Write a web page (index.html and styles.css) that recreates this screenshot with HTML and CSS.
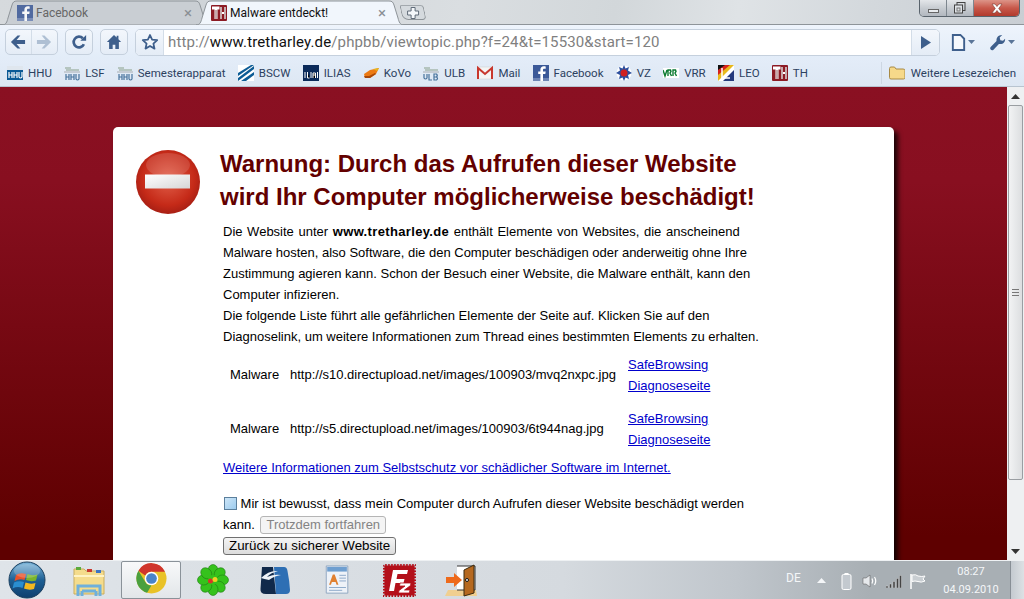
FILE: index.html
```html
<!DOCTYPE html>
<html lang="de">
<head>
<meta charset="utf-8">
<title>Malware entdeckt!</title>
<link rel="stylesheet" href="styles.css">
</head>
<body>
<svg class="defs" width="0" height="0" aria-hidden="true">
  <defs>
    <symbol id="fb" viewBox="0 0 16 16"><rect width="16" height="16" fill="#3b5998"/><rect y="13" width="16" height="3" fill="#6d84b4"/><path d="M10 16V9h2.300l.4-2.600H10V5c0-.8.3-1.200 1.300-1.200h1.400V1.400C12.300 1.300 11.600 1.200 10.800 1.200 8.700 1.200 7.400 2.500 7.400 4.700v1.700H5.200V9h2.200v7z" fill="#fff"/></symbol>
    <symbol id="th" viewBox="0 0 16 16"><rect width="16" height="16" rx="1" fill="#8c1a24"/><path d="M1 1.500h7.500v3H6.500V14h-3V4.500H1zM9 2h2v5h2V2h2v12h-2V9h-2v5H9z" fill="#fff"/><path d="M5 5v9M10 2v12M14 2v12" stroke="#5e0a12" stroke-width=".7"/></symbol>
    <symbol id="hhu" viewBox="0 0 16 16"><rect y="1" width="16" height="4" fill="#dfe6ee"/><rect y="5" width="16" height="10" fill="#0b5a96"/><path d="M2 7v6M5 7v6M2 10h3M7 7v6M10 7v6M7 10h3M12 7v5q1.500 2 3 0V7" stroke="#fff" stroke-width="1.200" fill="none"/></symbol>
    <symbol id="hhug" viewBox="0 0 16 16"><path d="M1 3h6M2 5h13" stroke="#8aa08a" stroke-width="1.200"/><rect y="6" width="16" height="2" fill="#c5ccd4"/><path d="M2 9v6M5 9v6M2 12h3M7 9v6M10 9v6M7 12h3M12 9v5q1.500 2 3 0V9" stroke="#47729c" stroke-width="1.200" fill="none"/></symbol>
    <symbol id="ulb" viewBox="0 0 16 16"><path d="M1 3h6M2 5h13" stroke="#8aa08a" stroke-width="1.200"/><rect y="6" width="16" height="2" fill="#c5ccd4"/><path d="M1 9v4q1.500 2 3 0V9M6 9v6h3M11 9v6h2.500q2-1.500 0-3h-2.500 2.500q1.500-1.500 0-3z" stroke="#47729c" stroke-width="1.200" fill="none"/></symbol>
    <symbol id="bscw" viewBox="0 0 16 16"><rect width="16" height="16" fill="#fff"/><path d="M0 16V13L16 1v3zM0 11V8L13 0h3zM3 16 16 7v3L8 16z" fill="#0d5c95"/></symbol>
    <symbol id="ilias" viewBox="0 0 16 16"><rect width="16" height="16" fill="#0b2a5a"/><path d="M2 7v6M4.500 7v6h2M8 7v6M10 13V8h2.500v5M10 10h2.500M14.500 7v6" stroke="#fff" stroke-width="1"/></symbol>
    <symbol id="kovo" viewBox="0 0 16 16"><path d="M1 9 7 5l9-2-3 6-6 4H2z" fill="#ec7a14"/><path d="M2 13h5l6-4-1-1-6 3H1z" fill="#a8480a"/><path d="M10 4l6-1-2 3z" fill="#e8b61a"/></symbol>
    <symbol id="mail" viewBox="0 0 16 16"><rect y="2" width="16" height="12" fill="#f4f4f4" stroke="#ccc" stroke-width=".5"/><path d="M1 14V3l7 6 7-6v11" fill="none" stroke="#c8372d" stroke-width="2"/></symbol>
    <symbol id="vz" viewBox="0 0 16 16"><circle cx="8" cy="8" r="7.500" fill="#fff"/><path d="M8 0l1.500 3.500L13 2l-1 3.500L16 8l-4 2 1 4-3.500-1.500L8 16l-1.500-3.500L3 14l1-4-4-2 4-2.500L3 2l3.500 1.500z" fill="#2c4f9e"/><circle cx="8" cy="8" r="3.500" fill="#d02020"/></symbol>
    <symbol id="vrr" viewBox="0 0 16 16"><rect y="3" width="16" height="10" fill="#fff"/><path d="M0 5l2 6 2-6M5 11V5h2.500l.5 1.500-1 1.500 1.500 3M10 11V5h2.500l.5 1.500-1 1.500 1.500 3" stroke="#0a7a30" stroke-width="1.400" fill="none"/></symbol>
    <symbol id="leo" viewBox="0 0 16 16"><rect width="16" height="16" fill="#fff"/><path d="M0 0h16L0 16z" fill="#e8b81a"/><path d="M0 0h12L0 10z" fill="#d4221e"/><path d="M0 0h7L0 5z" fill="#111"/><path d="M16 5 5 16h11z" fill="#24397c"/><path d="M4 3v10h8" stroke="#fff" stroke-width="1.500" fill="none"/></symbol>
    <linearGradient id="orb" x1="0" y1="0" x2="0" y2="1"><stop offset="0" stop-color="#7fb8dc"/><stop offset=".5" stop-color="#1d5f94"/><stop offset="1" stop-color="#0f3f6e"/></linearGradient>
    <radialGradient id="stopg" cx=".5" cy=".45" r=".55"><stop offset="0" stop-color="#e2604a"/><stop offset=".75" stop-color="#c52a18"/><stop offset="1" stop-color="#a81f14"/></radialGradient>
    <linearGradient id="barg" x1="0" y1="0" x2="1" y2="1"><stop offset="0" stop-color="#fff"/><stop offset="1" stop-color="#d6d6d6"/></linearGradient>
  </defs>
</svg>

<div class="tabstrip">
  <div class="tab tab-back">
    <svg class="tab-bg" viewBox="0 0 208 25" preserveAspectRatio="none"><path d="M0 25C4 25 5 22 6 18L10 5C11 2 12 1 15 1H193C196 1 197 2 198 5L202 18C203 22 204 25 208 25z" fill="#c9ced3" stroke="#8e9499"/></svg>
    <svg class="fav"><use href="#fb"/></svg>
    <span class="tab-title">Facebook</span>
    <span class="tab-x">×</span>
  </div>
  <div class="tab tab-active">
    <svg class="tab-bg" viewBox="0 0 208 25" preserveAspectRatio="none"><path d="M0 25C4 25 5 22 6 18L10 5C11 2 12 1 15 1H193C196 1 197 2 198 5L202 18C203 22 204 25 208 25z" fill="#f1f6fc" stroke="#8e9499"/></svg>
    <svg class="fav"><use href="#th"/></svg>
    <span class="tab-title">Malware entdeckt!</span>
    <span class="tab-x">×</span>
  </div>
  <div class="newtab">
    <svg width="14" height="14" viewBox="0 0 14 14"><path d="M5 1.500h4v3.500h3.500v4H9v3.500H5V9H1.500V5H5z" fill="#f4f7fa" stroke="#5f6b78"/></svg>
  </div>
  <div class="winctrls">
    <div class="wc wc-min"><span class="wc-minbar"></span></div>
    <div class="wc wc-max"><svg width="12" height="12" viewBox="0 0 12 12"><rect x="3" y=".5" width="8" height="8" fill="none" stroke="#444"/><rect x=".5" y="3" width="8" height="8" fill="#dfe3e7" stroke="#444"/><rect x="3" y="6" width="3" height="3" fill="none" stroke="#777"/></svg></div>
    <div class="wc wc-close"><svg width="14" height="11" viewBox="0 0 14 11"><path d="M2 1h3l2 2.500L9 1h3L8.700 5.500 12 10H9L7 7.500 5 10H2l3.300-4.500z" fill="#fff" stroke="#7a3a30" stroke-width=".6"/></svg></div>
  </div>
</div>

<div class="toolbar">
  <div class="tbtn tbtn-nav">
    <span class="nav-half nav-back"><svg width="16" height="14" viewBox="0 0 17 14"><path d="M8 0 1 7l7 7h3L7 9h9V5H7l4-5z" fill="#3e5f8c"/></svg></span>
    <span class="nav-half"><svg width="16" height="14" viewBox="0 0 17 14"><path d="M9 0l7 7-7 7H6l4-5H1V5h9L6 0z" fill="#aebfd3"/></svg></span>
  </div>
  <div class="tbtn tbtn-one"><svg width="16" height="16" viewBox="0 0 18 18"><path d="M14.500 11.500A6 6 0 1 1 13.300 4.800" fill="none" stroke="#3e5f8c" stroke-width="3"/><path d="M10.500 7.500h6.500V1z" fill="#3e5f8c"/></svg></div>
  <div class="tbtn tbtn-one"><svg width="16" height="16" viewBox="0 0 18 18"><path d="M9 1 1 9h2.500v8h4v-5h3v5h4V9H17l-3-3V2h-2v2z" fill="#3e5f8c"/></svg></div>
  <div class="omnibox">
    <div class="star"><svg width="18" height="18" viewBox="0 0 18 18"><path d="M9 2l2.100 4.700 5.100.5-3.800 3.400 1.100 5L9 13l-4.500 2.600 1.100-5L1.800 7.200l5.100-.5z" fill="#f3f7fc" stroke="#3e5f8c" stroke-width="1.800" stroke-linejoin="round"/></svg></div>
    <div class="url"><span class="url-dim">http://</span><span class="url-host">www.tretharley.de</span><span class="url-dim">/phpbb/viewtopic.php?f=24&amp;t=15530&amp;start=120</span></div>
    <div class="go"><svg width="11" height="13" viewBox="0 0 11 13"><path d="M1 0v13l10-6.500z" fill="#3e5f8c"/></svg></div>
  </div>
  <div class="tool tool-page"><svg width="15" height="17" viewBox="0 0 15 18"><path d="M1.500 1h8l4 4v12h-12z" fill="#f5f8fc" stroke="#3e5f8c" stroke-width="2"/></svg><svg class="caret" width="7" height="4" viewBox="0 0 7 4"><path d="M0 0h7L3.500 4z" fill="#5a7598"/></svg></div>
  <div class="tool tool-wrench"><svg width="17" height="17" viewBox="0 0 17 18"><path d="M1 14l6.500-6.500C7 4 9.500 .8 13.500 1L10.800 3.700 11.500 6.500l2.800.7L16.500 5C17 8.500 14 11.500 10 10.500L4 17C2 18 0 16 1 14z" fill="#3e5f8c"/></svg><svg class="caret" width="7" height="4" viewBox="0 0 7 4"><path d="M0 0h7L3.500 4z" fill="#5a7598"/></svg></div>
</div>

<div class="bookmarks">
  <div class="bm-list">
    <div class="bm"><svg class="fav"><use href="#hhu"/></svg>HHU</div>
    <div class="bm"><svg class="fav"><use href="#hhug"/></svg>LSF</div>
    <div class="bm"><svg class="fav"><use href="#hhug"/></svg>Semesterapparat</div>
    <div class="bm"><svg class="fav"><use href="#bscw"/></svg>BSCW</div>
    <div class="bm"><svg class="fav"><use href="#ilias"/></svg>ILIAS</div>
    <div class="bm"><svg class="fav"><use href="#kovo"/></svg>KoVo</div>
    <div class="bm"><svg class="fav"><use href="#ulb"/></svg>ULB</div>
    <div class="bm"><svg class="fav"><use href="#mail"/></svg>Mail</div>
    <div class="bm"><svg class="fav"><use href="#fb"/></svg>Facebook</div>
    <div class="bm"><svg class="fav"><use href="#vz"/></svg>VZ</div>
    <div class="bm"><svg class="fav"><use href="#vrr"/></svg>VRR</div>
    <div class="bm"><svg class="fav"><use href="#leo"/></svg>LEO</div>
    <div class="bm"><svg class="fav"><use href="#th"/></svg>TH</div>
  </div>
  <div class="bm bm-other"><svg class="fav" viewBox="0 0 16 16"><path d="M.5 3.500q0-1.500 1.500-1.500h3.500l1.500 2h7q2 0 2 1.500v7q0 1.500-1.500 1.500H2q-1.500 0-1.500-1.500z" fill="#f6d98a" stroke="#a88a45"/></svg>Weitere Lesezeichen</div>
</div>

<div class="viewport">
  <div class="page">
    <div class="card">
      <svg class="stop" width="66" height="66" viewBox="0 0 66 66"><circle cx="33" cy="33" r="32" fill="url(#stopg)"/><ellipse cx="33" cy="16" rx="22" ry="12" fill="#fff" opacity=".13"/><rect x="10" y="25.500" width="45" height="14" fill="url(#barg)"/></svg>
      <div class="main">
        <h1 class="headline">Warnung: Durch das Aufrufen dieser Website wird Ihr Computer möglicherweise beschädigt!</h1>
        <p class="para">Die Website unter <b>www.tretharley.de</b> enthält Elemente von Websites, die anscheinend Malware hosten, also Software, die den Computer beschädigen oder anderweitig ohne Ihre Zustimmung agieren kann. Schon der Besuch einer Website, die Malware enthält, kann den Computer infizieren.<br>Die folgende Liste führt alle gefährlichen Elemente der Seite auf. Klicken Sie auf den Diagnoselink, um weitere Informationen zum Thread eines bestimmten Elements zu erhalten.</p>
        <div class="mrow">
          <span class="mtype">Malware</span>
          <span class="murl">http://s10.directupload.net/images/100903/mvq2nxpc.jpg</span>
          <span class="mlink"><a href="#">SafeBrowsing<br>Diagnoseseite</a></span>
        </div>
        <div class="mrow">
          <span class="mtype">Malware</span>
          <span class="murl">http://s5.directupload.net/images/100903/6t944nag.jpg</span>
          <span class="mlink"><a href="#">SafeBrowsing<br>Diagnoseseite</a></span>
        </div>
        <p class="more"><a href="#">Weitere Informationen zum Selbstschutz vor schädlicher Software im Internet.</a></p>
        <div class="confirm">
          <span class="check"></span> Mir ist bewusst, dass mein Computer durch Aufrufen dieser Website beschädigt werden kann. <span class="btn btn-off">Trotzdem fortfahren</span><br>
          <span class="btn btn-on">Zurück zu sicherer Website</span>
        </div>
      </div>
    </div>
  </div>
  <div class="scrollbar">
    <div class="sb-btn"><svg width="9" height="5" viewBox="0 0 9 5"><path d="M4.500 0 9 5H0z" fill="#333"/></svg></div>
    <div class="sb-thumb"><span class="sb-grip"></span></div>
    <div class="sb-btn sb-down"><svg width="9" height="5" viewBox="0 0 9 5"><path d="M0 0h9L4.500 5z" fill="#333"/></svg></div>
  </div>
</div>

<div class="taskbar">
  <div class="start"><svg width="38" height="38" viewBox="0 0 38 38"><circle cx="19" cy="19" r="18" fill="url(#orb)" stroke="#1b3f5f"/><path d="M8 14q4-3 10-1l-1.500 6q-5-2-10 1z" fill="#e8532b"/><path d="M19.500 13q4 2 10 .5l-1.500 6q-5 1.500-10-.5z" fill="#7ab42c"/><path d="M6 21.500q5-2 10-.5l-1.500 6q-5-2-10 .5z" fill="#2a8ed0"/><path d="M17.500 21.500q5 2 10 .5l-1.500 6q-5 1.500-10-.5z" fill="#f3b81f"/><ellipse cx="19" cy="10" rx="13" ry="7" fill="#fff" opacity=".2"/></svg></div>
  <div class="ti"><svg width="32" height="32" viewBox="0 0 32 32"><path d="M1 5h10l2 2h18v23H1z" fill="#f5dc8c" stroke="#c9ad5e"/><rect x="3" y="3" width="5" height="3" fill="#5cab3c"/><rect x="14" y="5" width="5" height="3" fill="#c8372d"/><rect x="23" y="6" width="5" height="3" fill="#3c74c4"/><path d="M1 12h30" stroke="#fff3c4" stroke-width="2"/><path d="M5 32V22h22v10M9 27h14M9 32v-5M23 32v-5" fill="none" stroke="#6fb0dc" stroke-width="3"/></svg></div>
  <div class="ti ti-active"><svg class="up2" width="31" height="31" viewBox="0 0 32 32"><circle cx="16" cy="16" r="15.500" fill="#e9c227"/><path d="M2.500 8A15.500 15.500 0 0 1 30 9H16A7 7 0 0 0 9.500 13z" fill="#d0352c"/><path d="M2.500 8 9.300 19A7 7 0 0 0 16 23L11.500 30.800A15.500 15.500 0 0 1 2.500 8z" fill="#4ba03f"/><circle cx="16" cy="16" r="7" fill="#fff"/><circle cx="16" cy="16" r="5.500" fill="#4a84c8"/></svg></div>
  <div class="ti"><svg width="32" height="32" viewBox="0 0 32 32"><g fill="#35c21c" stroke="#1c7a12" stroke-width=".6"><ellipse cx="16" cy="6.500" rx="5" ry="6"/><ellipse cx="16" cy="6.500" rx="5" ry="6" transform="rotate(45 16 16)"/><ellipse cx="16" cy="6.500" rx="5" ry="6" transform="rotate(90 16 16)"/><ellipse cx="16" cy="6.500" rx="5" ry="6" transform="rotate(135 16 16)"/><ellipse cx="16" cy="6.500" rx="5" ry="6" transform="rotate(180 16 16)"/><ellipse cx="16" cy="6.500" rx="5" ry="6" transform="rotate(225 16 16)"/><ellipse cx="16" cy="6.500" rx="5" ry="6" transform="rotate(270 16 16)"/><ellipse cx="16" cy="6.500" rx="5" ry="6" transform="rotate(315 16 16)"/></g><circle cx="16" cy="16" r="5" fill="#35c21c"/><circle cx="13.500" cy="17" r="2.500" fill="#d8342a"/><circle cx="18" cy="15.500" r="2.500" fill="#f0d020"/></svg></div>
  <div class="ti"><svg width="30" height="29" viewBox="0 0 30 29"><path d="M2 1h11l3 27H6Q0 28 .5 23z" fill="#10294a"/><path d="M14 1h10q3 0 3.500 4 2 10 2.500 19 0 4-4 4h-10z" fill="#2e6fb4"/><path d="M1 12q8-8 17-7-8 2-11 6 7-3 14-2-7 1-12 5-5-1-8-2z" fill="#eef3f8"/></svg></div>
  <div class="ti"><svg width="25" height="30" viewBox="0 0 26 32"><path d="M1 1h23v29H1z" fill="#eef2f8" stroke="#8ea5c0"/><rect x="2" y="2" width="21" height="5" fill="#6f9fd0"/><path d="M4 21l4-11h2l4 11h-2l-1-3H7l-1 3z" fill="#e08030"/><path d="M15 11h7M15 14h7M15 17h7M4 24h18M4 27h14" stroke="#8aa6c8"/></svg></div>
  <div class="ti"><svg width="33" height="33" viewBox="0 0 33 33"><rect width="33" height="33" fill="#b3101a"/><rect x=".7" y=".7" width="31.600" height="31.600" fill="none" stroke="#c9ced3" stroke-width="1.400" stroke-dasharray="1.500 1.500"/><path d="M10 6h15l-1 4H14.500l-1 5h8l-1 4h-8l-1.500 8H6z" fill="#fff"/><path d="M17 19h11l-.5 2.500-6 4.500h5.500l-.7 3H15.500l.5-2.500 6-4.500h-5.500z" fill="#fff" stroke="#b3101a" stroke-width=".8"/></svg></div>
  <div class="ti"><svg width="32" height="34" viewBox="0 0 32 34"><path d="M3 27h28l1 6H0z" fill="#f0cf90"/><path d="M12 3h18v24H12" fill="#fff" stroke="#333"/><path d="M19 7l10-5v28l-10 3z" fill="#b5681f" stroke="#3a2a10"/><circle cx="22" cy="17" r="1.500" fill="#fff" stroke="#111"/><path d="M1 14h8v-4l8 7-8 7v-4H1z" fill="#ee6a1c"/></svg></div>
  <div class="tray">
    <span class="lang">DE</span>
    <svg class="tri" width="9" height="5" viewBox="0 0 9 5"><path d="M4.500 0 9 5H0z" fill="#f4f6f8"/></svg>
    <svg class="tr-bat" width="11" height="17" viewBox="0 0 11 17"><rect x="3.500" y="0" width="4" height="2" fill="#fff"/><rect x="1" y="1.500" width="9" height="15" rx="1.500" fill="#c3c9cf" stroke="#fff"/></svg>
    <svg class="tr-vol" width="16" height="14" viewBox="0 0 16 14"><path d="M1 4h3l4-3v12L4 10H1z" fill="#e6e9ec" stroke="#555" stroke-width=".5"/><path d="M10 4.500q1.500 2.500 0 5M12.500 3q2.500 4 0 8" fill="none" stroke="#fff" stroke-width="1.200"/></svg>
    <svg class="tr-sig" width="16" height="13" viewBox="0 0 16 13"><path d="M0 11h2v2H0zM3.500 9h2v4h-2zM7 6.500h2V13H7zM10.500 3.500h2V13h-2zM13.500 0.500h2V13h-2z" fill="#444" stroke="#ddd" stroke-width=".4"/></svg>
    <svg class="tr-flag" width="16" height="15" viewBox="0 0 16 15"><path d="M1 0v15" stroke="#fff" stroke-width="1.500"/><path d="M2 1q4-1 6 1 4 1 7 0l-2 3 2 2q-4 2-7 .5-3-1-6 0z" fill="#c9ced2" stroke="#fff"/></svg>
    <div class="clock"><span>08:27</span><span>04.09.2010</span></div>
    <div class="showdesk"></div>
  </div>
</div>
</body>
</html>
```
FILE: styles.css
```css
* { box-sizing: border-box; }
html, body { margin: 0; padding: 0; width: 1024px; height: 599px; overflow: hidden; }
body { display: flex; flex-direction: column; font-family: Roboto, "Open Sans", sans-serif; background: #d3d8dc; }
.defs { position: absolute; }
.fav { width: 16px; height: 16px; flex: none; }

/* tab strip */
.tabstrip { height: 25px; flex: none; display: flex; align-items: flex-end; padding-left: 2px; position: relative;
  background: linear-gradient(100deg, #d6dadd 0%, #cfd4d8 20%, #dadee1 45%, #d2d7da 60%, #dfe3e6 72%, #d3d8dc 85%, #c9ced3 100%); border-bottom: 1px solid #8e9499; }
.tab { width: 208px; height: 25px; margin-bottom: -1px; display: flex; align-items: center; position: relative; padding: 1px 18px 0 15px; font-size: 12px; margin-right: -14px; }
.tab-bg { position: absolute; left: 0; top: 0; width: 100%; height: 100%; }
.tab > .fav, .tab-title, .tab-x { position: relative; }
.tab-title { flex: 1; padding-left: 3px; color: #111; white-space: nowrap; }
.tab-back .tab-title { color: #666; }
.tab-back .fav { opacity: .85; }
.tab-x { color: #8a8f94; font-size: 15px; line-height: 1; }
.newtab { width: 24px; height: 15px; margin: 0 0 4px 11px; border: 1px solid #8e9499; border-top-color: #a3a9ae; border-radius: 2px 3px 4px 6px; display: flex; align-items: center; justify-content: center; background: #d5dade; transform: skewX(12deg); }
.newtab svg { transform: skewX(-12deg); }
.winctrls { position: absolute; right: 4px; top: 0; width: 101px; height: 17px; display: flex; border: 1px solid #59636c; border-top: none; border-radius: 0 0 5px 5px; overflow: hidden; }
.wc { display: flex; align-items: center; justify-content: center; }
.wc-min, .wc-max { width: 27px; background: linear-gradient(#e3e6e9, #c7ccd1 50%, #b2b8bf); border-right: 1px solid #7d868e; }
.wc-minbar { width: 11px; height: 4px; margin-top: 6px; background: #e9ecef; border: 1px solid #666; }
.wc-close { flex: 1; background: linear-gradient(#dd9488, #c8584a 50%, #b13a2c); }

/* toolbar */
.toolbar { height: 34px; flex: none; display: flex; align-items: center; padding: 0 0 0 5px; background: linear-gradient(#eef4fc, #e2ecf8); gap: 7px; }
.tbtn { height: 26px; border: 1px solid #c5d0dd; border-radius: 5px; background: linear-gradient(#f3f7fc, #e4ecf6); display: flex; align-items: center; justify-content: center; }
.tbtn-nav { width: 53px; }
.nav-half { width: 26px; height: 24px; display: flex; align-items: center; justify-content: center; }
.nav-back { border-right: 1px solid #d3dde8; }
.tbtn-one { width: 28px; }
.omnibox { width: 805px; height: 27px; display: flex; align-items: center; border: 1px solid #c5d0dd; border-radius: 5px; background: #fff; overflow: hidden; }
.star { width: 28px; height: 100%; flex: none; display: flex; align-items: center; justify-content: center; background: linear-gradient(#f3f7fc, #e4ecf6); border-right: 1px solid #d3dde8; }
.url { flex: 1; padding-left: 4px; font-size: 15px; letter-spacing: .13px; white-space: nowrap; color: #111; }
.url-dim { color: #808080; }
.go { width: 28px; height: 100%; flex: none; display: flex; align-items: center; justify-content: center; background: linear-gradient(#f3f7fc, #e4ecf6); border-left: 1px solid #d3dde8; }
.tool { display: flex; align-items: center; gap: 2px; }
.tool-page { margin-left: 4px; }
.tool-wrench { margin-left: 7px; }

/* bookmarks */
.bookmarks { height: 28px; flex: none; display: flex; align-items: center; justify-content: space-between; padding: 0 8px 0 7px; background: linear-gradient(#e3ecf8, #dde7f3); border-bottom: 1px solid #b8c4d0; font-size: 11.500px; color: #2c4160; }
.bm-list { display: flex; gap: 12.250px; }
.bm { display: flex; align-items: center; gap: 5px; white-space: nowrap; }
.bm-other { border-left: 1px solid #cdd7e3; padding-left: 7px; height: 22px; gap: 6px; }

/* page */
.viewport { flex: 1; min-height: 0; display: flex; overflow: hidden; }
.page { flex: 1; padding: 40px 0 0 113px; background: linear-gradient(#8a1022, #880f20 20%, #5e0000 95%); overflow: hidden; }
.card { width: 781px; height: 600px; background: #fff; border-radius: 5px; box-shadow: 4px 4px 5px rgba(0,0,0,.8); padding: 22px 0 0 22px; display: flex; gap: 19px; font-family: "Liberation Sans", Arial, sans-serif; color: #000; font-size: 13px; line-height: 21px; }
.stop { flex: none; }
.main { width: 540px; }
.headline { margin: -2px 0 0; font-size: 24px; line-height: 33px; font-weight: bold; color: #630000; }
.para { margin: 8px 0 0 3px; }
.para b { letter-spacing: .35px; }
.para::first-line { word-spacing: 1px; }
a { color: #0000cc; text-decoration: underline; }
.mrow { display: flex; align-items: center; margin: 7px 0 12px 10px; }
.mtype { width: 60px; margin-top: -2px; }
.murl { width: 338px; margin-top: -2px; }
.more { margin: -5px 0 0 3px; }
.confirm { margin: 15px 0 0 3px; }
.check { display: inline-block; width: 13px; height: 13px; vertical-align: -2px; border: 1px solid #5b7f9c; background: linear-gradient(135deg, #cde6f8, #9ccbee); margin-left: 1px; }
.btn { display: inline-block; font-size: 13.330px; line-height: 16px; padding: 0 5px; border: 1px solid #707070; border-radius: 3px; background: linear-gradient(#f4f4f4, #dcdcdc); vertical-align: baseline; }
.btn-off { color: #838383; border-color: #b5b5b5; background: #f4f4f4; font-size: 13px; margin-left: 2px; }

/* scrollbar */
.scrollbar { width: 17px; flex: none; background: #eef0f2; display: flex; flex-direction: column; align-items: center; }
.sb-btn { height: 18px; flex: none; display: flex; align-items: center; justify-content: center; }
.sb-down { margin-top: auto; }
.sb-thumb { width: 15px; height: 375px; border: 1px solid #9a9ea2; border-radius: 2px; background: linear-gradient(90deg, #f2f3f4, #dcdee0); display: flex; align-items: center; justify-content: center; }
.sb-grip { width: 7px; height: 7px; border-top: 1px solid #777; border-bottom: 1px solid #777; background: linear-gradient(transparent 40%, #777 40%, #777 60%, transparent 60%); }

/* taskbar */
.taskbar { height: 39px; flex: none; display: flex; background: linear-gradient(90deg, #dfe4e9 0, #d5dadf 55%, #c0c6cc 72%, #a8afb4 85%); border-top: 1px solid #eef1f3; }
.start { width: 54px; margin-right: 4px; display: flex; align-items: center; justify-content: center; }
.ti { width: 62px; display: flex; align-items: center; justify-content: center; }
.ti-active { background: linear-gradient(#f8f9fa, #e2e6e9); border: 1px solid #8a9299; border-radius: 2px; margin: 0 1px; width: 60px; }
.up2 { margin-bottom: 3px; }
.tray { flex: 1; display: flex; align-items: center; color: #f4f6f8; font-size: 11px; padding-left: 294px; }
.lang { width: 31px; margin-top: -4px; font-size: 12px; flex: none; }
.tri { margin-right: 15px; flex: none; }
.tr-bat { margin-right: 10px; flex: none; margin-top: 2px; }
.tr-vol { margin-right: 8px; flex: none; margin-top: 2px; }
.tr-sig { margin-right: 8px; flex: none; margin-top: 2px; }
.tr-flag { flex: none; margin-top: 2px; }
.clock { width: 70px; margin: 2px 0 0 10px; flex: none; display: flex; flex-direction: column; align-items: center; line-height: 18px; font-size: 11px; }
.showdesk { margin-left: auto; align-self: stretch; width: 14px; background: linear-gradient(90deg, #c4cad0, #dde1e4); border-left: 1px solid #888f96; }
```
